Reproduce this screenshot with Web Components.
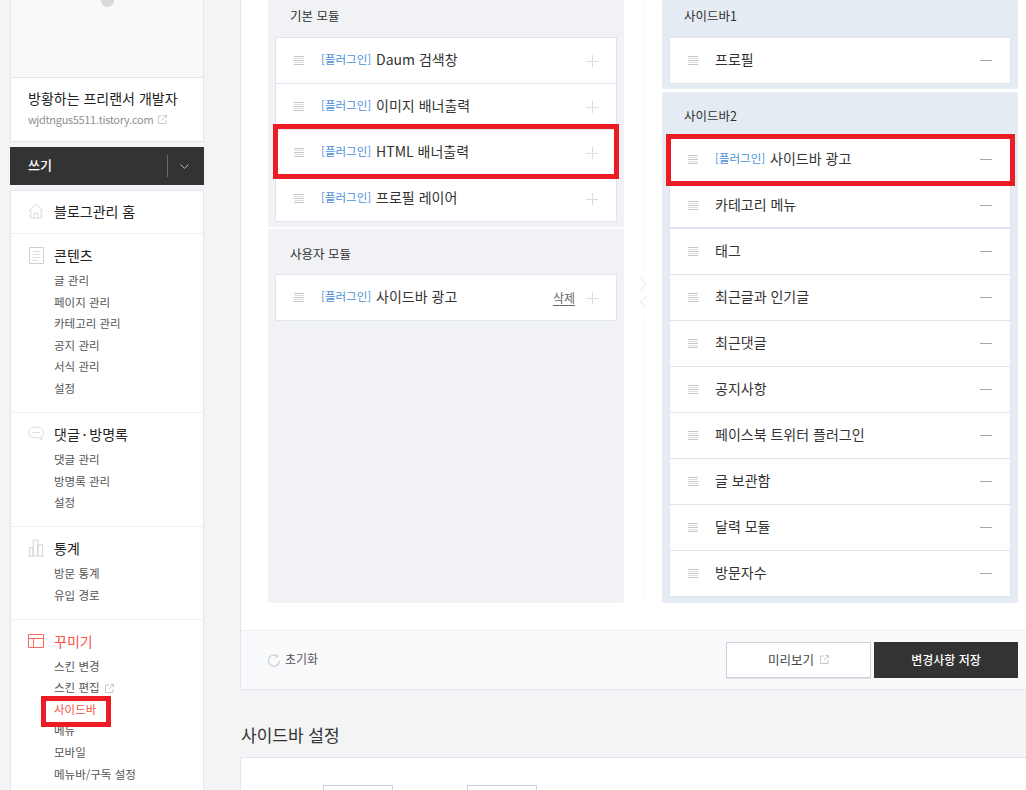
<!DOCTYPE html>
<html lang="ko">
<head>
<meta charset="utf-8">
<title>사이드바</title>
<style>
  html, body { margin: 0; height: 790px; overflow: hidden; background: #f3f4f6; }
  body { font-family: "Noto Sans CJK KR", "Noto Sans", sans-serif; color: #333; }
</style>
</head>
<body>
<admin-page>
  <side-nav slot="nav">
    <profile-card name="방황하는 프리랜서 개발자" url="wjdtngus5511.tistory.com"></profile-card>
    <write-button>쓰기</write-button>
    <nav-card>
      <nav-group icon="home" title="블로그관리 홈" single></nav-group>
      <nav-group icon="doc" title="콘텐츠">
        <nav-link>글 관리</nav-link><nav-link>페이지 관리</nav-link><nav-link>카테고리 관리</nav-link>
        <nav-link>공지 관리</nav-link><nav-link>서식 관리</nav-link><nav-link>설정</nav-link>
      </nav-group>
      <nav-group icon="chat" title="댓글&#8201;·&#8201;방명록">
        <nav-link>댓글 관리</nav-link><nav-link>방명록 관리</nav-link><nav-link>설정</nav-link>
      </nav-group>
      <nav-group icon="chart" title="통계">
        <nav-link>방문 통계</nav-link><nav-link>유입 경로</nav-link>
      </nav-group>
      <nav-group icon="layout" title="꾸미기" active>
        <nav-link>스킨 변경</nav-link><nav-link external>스킨 편집</nav-link>
        <nav-link active><red-mark style="--t:-3px;--r:-15px;--b:-7px;--l:-13px"></red-mark>사이드바</nav-link>
        <nav-link>메뉴</nav-link><nav-link>모바일</nav-link><nav-link>메뉴바/구독 설정</nav-link>
      </nav-group>
    </nav-card>
  </side-nav>

  <editor-card>
    <module-column slot="left" style="--col-gap:2px">
      <module-panel title="기본 모듈" style="--top:6px;--bottom:5px">
        <module-row plugin="[플러그인]" add>Daum 검색창</module-row>
        <module-row plugin="[플러그인]" add>이미지 배너출력</module-row>
        <module-row plugin="[플러그인]" add><red-mark style="--t:-6px;--r:-3px;--b:-4px;--l:-3px"></red-mark>HTML 배너출력</module-row>
        <module-row plugin="[플러그인]" add>프로필 레이어</module-row>
      </module-panel>
      <module-panel title="사용자 모듈" fill style="--top:15px;--h:30px">
        <module-row plugin="[플러그인]" add removable>사이드바 광고</module-row>
      </module-panel>
    </module-column>
    <move-arrows slot="arrows"></move-arrows>
    <module-column slot="right">
      <module-panel title="사이드바1" tone="blue" style="--top:6px;--bottom:5px">
        <module-row>프로필</module-row>
      </module-panel>
      <module-panel title="사이드바2" tone="blue" fill style="--top:14px;--h:30px;--bottom:6px">
        <module-row plugin="[플러그인]"><red-mark style="--t:-3px;--r:-5px;--b:-4px;--l:-4px"></red-mark>사이드바 광고</module-row>
        <module-row thick>카테고리 메뉴</module-row>
        <module-row>태그</module-row>
        <module-row>최근글과 인기글</module-row>
        <module-row>최근댓글</module-row>
        <module-row>공지사항</module-row>
        <module-row>페이스북 트위터 플러그인</module-row>
        <module-row>글 보관함</module-row>
        <module-row>달력 모듈</module-row>
        <module-row>방문자수</module-row>
      </module-panel>
    </module-column>
    <action-bar slot="actions"></action-bar>
  </editor-card>
  <settings-card slot="settings"></settings-card>
</admin-page>

<script>
const ICONS = {
  home: '<svg width="17" height="16" viewBox="0 0 17 16" fill="none" stroke="#d6d6d6"><path d="M.7 8.200 8.500.8l7.800 7.400M3 6.500v9h11v-9M6.500 15.500v-5h4v5"/></svg>',
  doc: '<svg width="15" height="17" viewBox="0 0 15 17" fill="none" stroke="#cfcfcf"><path d="M.5.5h14v16H.5z"/><path d="M3.500 4.500h8M3.500 7.500h8M3.500 10.500h8M3.500 13.500h5" stroke="#dcdcdc"/></svg>',
  chat: '<svg width="17" height="15" viewBox="0 0 17 15" fill="none" stroke="#d6d6d6"><path d="M8.500.5c4.400 0 8 2.500 8 5.700 0 1.700-1 3.200-2.500 4.200l.8 3.400-3.600-2.100c-.9.200-1.800.3-2.700.3-4.400 0-8-2.500-8-5.800C.5 3 4.100.5 8.500.5Z"/><path d="M5 6.500h1.500M8 6.500h1.500M11 6.500h1.500" stroke="#bdbdbd"/></svg>',
  chart: '<svg width="17" height="18" viewBox="0 0 17 18" fill="none" stroke="#d2d2d2"><path d="M0 17.500h17M1.500 17V8.500h4V17M5.500 17V.5h5V17M10.500 17V5.500h5V17"/></svg>',
  layout: '<svg width="16" height="14" viewBox="0 0 16 14" fill="none" stroke="#f9655f"><path d="M.5.5h15v13H.5zM.5 4.500h15M5.500 4.500v9"/></svg>',
  external: '<svg width="9" height="9" viewBox="0 0 9 9" fill="none" stroke="#c9c9c9"><path d="M4 1H.5v7.500H8V5M4 5l4.500-4.500M5.500.5h3v3"/></svg>',
  chevron: '<svg width="9" height="5" viewBox="0 0 9 5" fill="none" stroke="#b5b5b5"><path d="m.5.500 4 3.800 4-3.800"/></svg>',
  reset: '<svg width="12" height="13" viewBox="0 0 12 13" fill="none" stroke="#c6cad1" stroke-width="1.200"><path d="M9.600 2.600a5.500 5.500 0 1 0 1.800 4.400"/><path d="M9.800.4v2.700H7.200" stroke-width="1"/></svg>',
  handle: '<svg width="10" height="9" viewBox="0 0 10 9" stroke="#c6c6c6"><path d="M0 .5h10M0 4.500h10M0 8.500h10"/><path d="M0 2.500h10M0 6.500h10" stroke="#dcdcdc"/></svg>',
  plus: '<svg width="12" height="12" viewBox="0 0 12 12" stroke="#dcdcdc"><path d="M0 6.500h12M6.500 0v12"/></svg>',
  minus: '<svg width="12" height="1" viewBox="0 0 12 1" stroke="#a8a8a8"><path d="M0 .5h12"/></svg>',
  right: '<svg width="7" height="12" viewBox="0 0 7 12" fill="none" stroke="#e3e4e8"><path d="m.5.500 6 5.500-6 5.500"/></svg>',
  left: '<svg width="7" height="12" viewBox="0 0 7 12" fill="none" stroke="#e3e4e8"><path d="M6.500.5.500 6l6 5.500"/></svg>'
}

// every component here is only markup + styles, so one small base class is enough
class Box extends HTMLElement {
  constructor() {
    super();
    this._shadowRoot = this.attachShadow({ mode: 'open' });
  }

  connectedCallback() {
    this._shadowRoot.innerHTML = this.render();
  }
}

customElements.define('admin-page', class extends Box {
  render() {
    return `<style>
      :host { display: flex; height: 790px; overflow: hidden; }
      .nav { flex: none; width: 194px; margin: 0 36px 0 10px; }
      .main { flex: 1; min-width: 0; }
    </style>
    <div class="nav"><slot name="nav"></slot></div>
    <div class="main"><slot></slot><slot name="settings"></slot></div>`;
  }
});

customElements.define('side-nav', class extends Box {
  render() {
    return `<style>:host { display: block; }</style><slot></slot>`;
  }
});

customElements.define('profile-card', class extends Box {
  render() {
    return `<style>
      :host { display: block; box-sizing: border-box; height: 142px; background: #fff; border: 1px solid #e4e5ec; border-top: 0; }
      .preview { position: relative; height: 77px; background: #f9f9fa; border-bottom: 1px solid #e4e5ec; overflow: hidden; }
      .dot { position: absolute; left: 90px; top: -6px; width: 13px; height: 13px; border-radius: 50%; background: #d9d9d9; }
      .info { padding: 10px 17px 0; }
      .name { font-size: 14px; line-height: 20px; color: #222; white-space: nowrap; }
      .url { display: flex; align-items: center; gap: 5px; margin-top: 2px; font-size: 11px; letter-spacing: -.33px; line-height: 18px; color: #909090; white-space: nowrap; }
    </style>
    <div class="preview"><span class="dot"></span></div>
    <div class="info">
      <div class="name">${this.getAttribute('name')}</div>
      <div class="url">${this.getAttribute('url')} ${ICONS.external}</div>
    </div>`;
  }
});

customElements.define('write-button', class extends Box {
  render() {
    return `<style>
      :host { display: flex; align-items: center; justify-content: space-between; box-sizing: border-box; height: 38px; margin-top: 5px; padding-left: 18px; background: #333; color: #fff; font-size: 13px; font-weight: 500; }
      .txt { padding-bottom: 4px; }
      .more { display: flex; align-items: center; justify-content: center; width: 37px; height: 22px; padding-right: 3px; box-sizing: border-box; border-left: 1px solid #6a6a6a; }
    </style>
    <span class="txt"><slot></slot></span><span class="more">${ICONS.chevron}</span>`;
  }
});

customElements.define('nav-card', class extends Box {
  render() {
    return `<style>
      :host { display: block; margin-top: 5px; background: #fff; border: 1px solid #e4e5ec; border-bottom: 0; }
    </style><slot></slot>`;
  }
});

customElements.define('nav-group', class extends Box {
  render() {
    const single = this.hasAttribute('single');
    const active = this.hasAttribute('active');
    return `<style>
      :host { display: block; padding: ${single ? '9px 0 11px' : '10px 0 12.4px'} 17px; border-bottom: 1px solid #eff0f3; }
      :host(:last-child) { border-bottom: 0; }
      .title { display: flex; align-items: center; height: 22px; font-size: 14px; color: ${active ? '#f9504a' : '#222'}; white-space: nowrap; }
      .icon { display: flex; align-items: center; justify-content: center; flex: none; width: 16px; margin-right: 10px; }
      .subs { padding: ${single ? 0 : '4px'} 0 0 26px; }
    </style>
    <div class="title"><span class="icon">${ICONS[this.getAttribute('icon')]}</span>${this.getAttribute('title')}</div>
    ${single ? '' : '<div class="subs"><slot></slot></div>'}`;
  }
});

customElements.define('nav-link', class extends Box {
  render() {
    const active = this.hasAttribute('active');
    return `<style>
      :host { display: block; height: 21.6px; line-height: 21.6px; font-size: 11.500px; color: ${active ? '#f9504a' : '#555'}; white-space: nowrap; }
      .in { position: relative; display: inline-flex; align-items: center; gap: 5px; }
    </style>
    <span class="in"><slot></slot>${this.hasAttribute('external') ? ICONS.external : ''}</span>`;
  }
});

// red highlight drawn over a row, it belongs on top of the content
customElements.define('red-mark', class extends Box {
  render() {
    return `<style>
      :host { position: absolute; top: var(--t); right: var(--r); bottom: var(--b); left: var(--l); border: 5px solid #ed1c24; z-index: 2; pointer-events: none; }
    </style>`;
  }
});

customElements.define('editor-card', class extends Box {
  render() {
    return `<style>
      :host { display: block; box-sizing: border-box; height: 690px; background: #fff; border-left: 1px solid #e4e5ec; border-bottom: 1px solid #e4e5ec; }
      .cols { display: grid; grid-template-columns: 356px 38px 356px; height: 603px; padding: 0 8px 0 27px; margin-bottom: 27px; }
    </style>
    <div class="cols"><slot name="left"></slot><slot name="arrows"></slot><slot name="right"></slot></div>
    <slot name="actions"></slot>`;
  }
});

customElements.define('module-column', class extends Box {
  render() {
    return `<style>
      :host { display: flex; flex-direction: column; gap: var(--col-gap, 3px); min-height: 0; }
      ::slotted([fill]) { flex: 1; }
    </style><slot></slot>`;
  }
});

customElements.define('module-panel', class extends Box {
  render() {
    return `<style>
      :host { display: block; padding: var(--top, 6px) 7px var(--bottom, 6px); background: ${this.getAttribute('tone') === 'blue' ? '#e5ebf2' : '#f1f2f6'}; border-radius: 2px; }
      h3 { margin: 0 0 0 15px; height: var(--h, 31px); font-size: 12.500px; font-weight: 400; line-height: 20px; color: #333; }
      .list { border: 1px solid #e1e4ec; border-bottom: 0; background: #fff; }
    </style>
    <h3>${this.getAttribute('title')}</h3>
    <div class="list"><slot></slot></div>`;
  }
});

customElements.define('module-row', class extends Box {
  render() {
    const plugin = this.getAttribute('plugin');
    const add = this.hasAttribute('add');
    return `<style>
      :host { display: flex; align-items: center; position: relative; box-sizing: border-box; height: 46px; padding: 0 18px; background: #fff; border-bottom: 1px solid #e1e4ec; font-size: 14px; color: #333; white-space: nowrap; }
      :host([thick]) { border-bottom-width: 2px; }
      .handle { display: flex; flex: none; width: 27px; }
      .txt { display: flex; align-items: center; padding-bottom: 3px; }
      .plugin { margin-right: 5px; font-size: 11.500px; color: #4a90d9; }
      .del { margin-left: auto; padding-bottom: 1px; font-size: 12px; color: #666; text-decoration: underline; text-underline-offset: 2px; }
      .act { display: flex; margin-left: auto; }
      .del + .act { margin-left: 11px; }
    </style>
    <span class="handle">${ICONS.handle}</span>
    <span class="txt">${plugin ? `<span class="plugin">${plugin}</span>` : ''}<slot></slot></span>
    ${this.hasAttribute('removable') ? '<span class="del">삭제</span>' : ''}
    <span class="act">${add ? ICONS.plus : ICONS.minus}</span>`;
  }
});

customElements.define('move-arrows', class extends Box {
  render() {
    return `<style>
      :host { display: flex; flex-direction: column; align-items: center; }
      .line { flex: 1; width: 1px; background: #f6f6f8; }
      .btns { display: flex; flex-direction: column; align-items: center; gap: 6px; padding: 8px 0; background: #fff; }
      .top { flex: none; height: 270px; }
    </style>
    <span class="line top"></span>
    <div class="btns">${ICONS.right}${ICONS.left}</div>
    <span class="line"></span>`;
  }
});

customElements.define('action-bar', class extends Box {
  render() {
    return `<style>
      :host { display: flex; align-items: center; box-sizing: border-box; height: 59px; padding: 0 8px 0 27px; background: #f9fafc; border-top: 1px solid #eff0f3; font-size: 12px; }
      .reset { display: flex; align-items: center; gap: 5px; color: #555; margin-right: auto; }
      .reset span { padding-bottom: 3px; }
      .btn { display: flex; align-items: center; justify-content: center; gap: 6px; box-sizing: border-box; height: 36px; padding-bottom: 1px; }
      .preview { width: 145px; background: #fff; border: 1px solid #ccd0d8; box-shadow: 0 1px 0 #e4e5ea; color: #444; font-size: 12.500px; }
      .save { width: 144px; margin-left: 3px; background: #333; color: #fff; font-weight: 500; }
    </style>
    <span class="reset">${ICONS.reset}<span>초기화</span></span>
    <span class="btn preview">미리보기 ${ICONS.external}</span>
    <span class="btn save">변경사항 저장</span>`;
  }
});

customElements.define('settings-card', class extends Box {
  render() {
    return `<style>
      :host { display: block; }
      h2 { margin: 0; padding: 31px 0 9px 1px; font-size: 17px; font-weight: 400; line-height: 27px; color: #333; }
      .card { display: flex; height: 60px; padding: 27px 0 0 82px; background: #fff; border-top: 1px solid #e4e5ec; border-left: 1px solid #e4e5ec; }
      .field { box-sizing: border-box; width: 70px; height: 30px; border: 1px solid #ccd0d8; margin-right: 74px; }
    </style>
    <h2>사이드바 설정</h2>
    <div class="card"><span class="field"></span><span class="field"></span></div>`;
  }
});
</script>
</body>
</html>
